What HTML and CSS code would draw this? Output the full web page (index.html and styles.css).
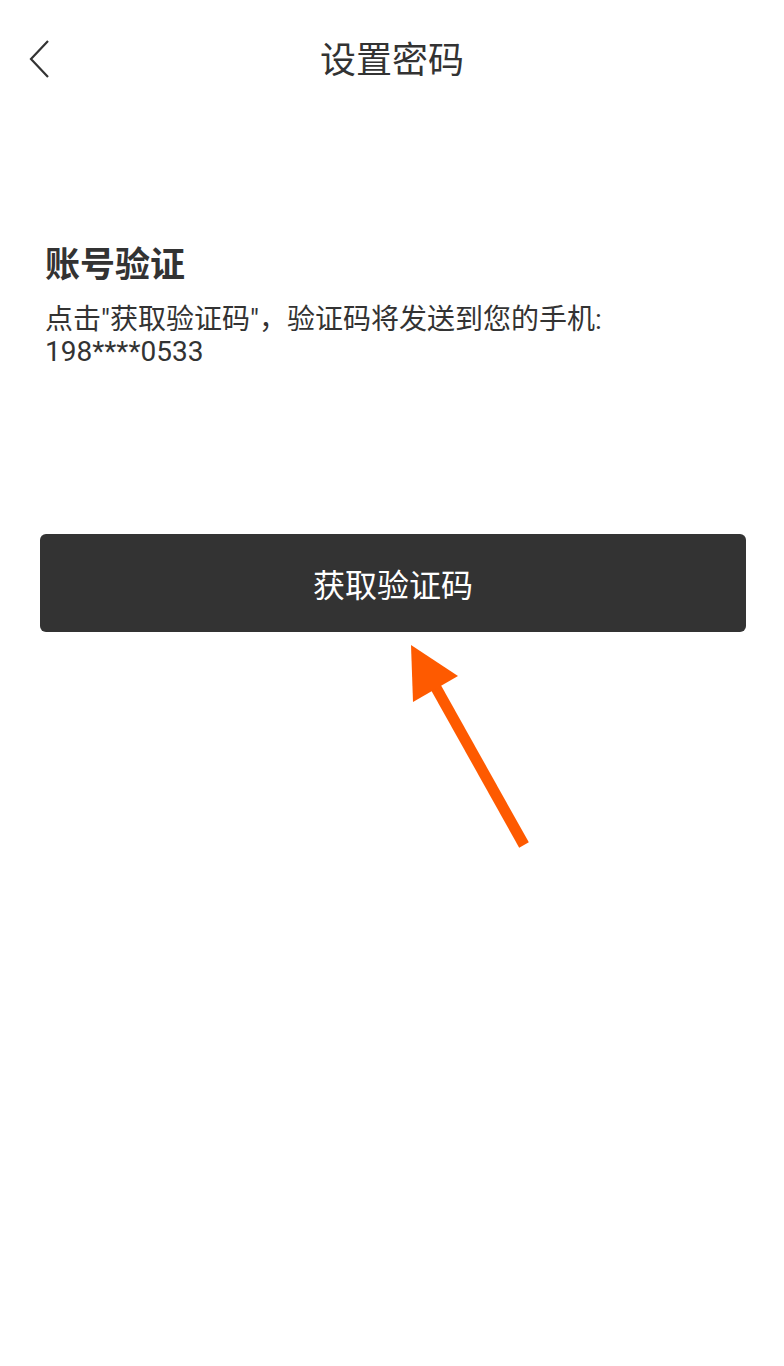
FILE: index.html
```html
<!DOCTYPE html>
<html lang="zh-CN">
<head>
<meta charset="utf-8">
<link rel="stylesheet" href="styles.css">
</head>
<body>
<div class="page">
  <header class="nav">
    <svg class="back" width="24" height="40" viewBox="0 0 24 40"><polyline points="20,2 3,20 20,38" fill="none" stroke="#333" stroke-width="2.2"/></svg>
    <h1 class="title">设置密码</h1>
  </header>
  <section class="verify">
    <h2 class="heading">账号验证</h2>
    <p class="desc">点击"获取验证码"，验证码将发送到您的手机:<br>198****0533</p>
  </section>
  <div class="action">
    <button class="btn">获取验证码</button>
    <svg class="arrow" width="140" height="230" viewBox="0 0 140 230"><line x1="124" y1="210" x2="30" y2="42" stroke="#fe5a00" stroke-width="11"/><polygon points="11,10 13,67 58,41" fill="#fe5a00"/></svg>
  </div>
</div>
</body>
</html>
```
FILE: styles.css
```css
* { box-sizing: border-box; }
html, body { margin: 0; padding: 0; background: #fff; }
body { font-family: "Noto Sans CJK SC", Roboto, "Noto Sans", sans-serif; color: #333; }
.page { width: 784px; height: 1366px; }
.nav { position: relative; height: 120px; display: flex; justify-content: center; align-items: flex-start; }
.back { position: absolute; left: 28px; top: 39px; }
.title { margin: 0; padding-top: 32px; font-size: 36px; font-weight: 400; line-height: 50px; color: #333; }
.verify { padding: 119px 0 0 45px; }
.heading { margin: 0; font-size: 35px; font-weight: 700; line-height: 46px; color: #333; }
.desc { margin: 19px 0 0; font-family: Roboto, "Noto Sans CJK SC", sans-serif; font-size: 28px; line-height: 32px; color: #333; }
.action { position: relative; padding: 166px 38px 0 40px; }
.btn { display: block; width: 100%; height: 98px; border: 0; border-radius: 6px; background: #333; color: #fff; font-family: "Noto Sans CJK SC", sans-serif; font-size: 32px; padding: 0; }
.arrow { position: absolute; left: 400px; top: calc(100% + 3px); }
```
